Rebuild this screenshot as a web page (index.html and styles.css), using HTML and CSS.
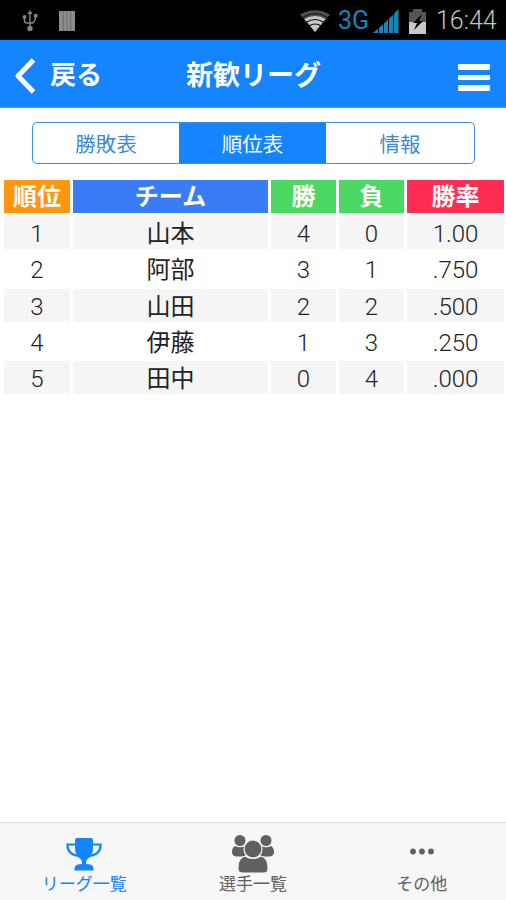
FILE: index.html
```html
<!DOCTYPE html>
<html lang="ja">
<head>
<meta charset="utf-8">
<title>新歓リーグ</title>
<link rel="stylesheet" href="styles.css">
</head>
<body>
<div class="status">
  <svg class="usb" width="16" height="22" viewBox="0 0 16 22" fill="none" stroke="#858585" stroke-width="1.4"><path d="M8 3v15M2.500 7v3.500Q2.500 13 5 13h5.500Q13.500 12 13.500 6"/><g fill="#858585" stroke="none"><path d="M8 0l2.500 4h-5zM12 4h3.500v3.500H12z"/><circle cx="2.500" cy="7" r="1.900"/><circle cx="8" cy="18.500" r="2.700"/></g></svg>
  <svg class="bars" width="16" height="20" viewBox="0 0 17 20" preserveAspectRatio="none"><path fill="#8c8c8c" d="M0 0h17v20H0z"/><path stroke="#6c6c6c" stroke-width="1" d="M4.500 0v20M8.500 0v20M12.500 0v20"/></svg>
  <div class="status-right">
    <svg width="30" height="22" viewBox="0 0 30 22"><path fill="#505050" d="M0 4.500Q15-4 30 4.500L15 22z"/><path fill="#c8c8c8" d="M4.500 9Q15 3 25.500 9L15 22z"/><path fill="none" stroke="#111" stroke-width="1.200" d="M2 8Q15-.5 28 8M6 12.500q9-6 18 0M9 16q6-4 12 0"/></svg>
    <span class="network">3G</span>
    <svg class="signal" width="26" height="24" viewBox="0 0 26 24" fill="#1786b5"><path d="M0 24l5-4.500V24zM6 18.700l4-3.400V24H6zM11 14.300l4-3.700V24h-4zM16 9.700l4-3.900V24h-4zM21 4.800L25.500 0v24H21z"/></svg>
    <svg class="battery" width="17" height="25" viewBox="0 0 17 25"><path fill="#555" d="M4 0h9v3h4v22H0V3h4z"/><path fill="#c8c8c8" d="M0 13h17v12H0z"/><path fill="#000" d="M13 5L4 14h4L5 21l9-9h-4z"/></svg>
    <span class="clock">16:44</span>
  </div>
</div>
<header class="nav">
  <div class="back"><svg width="22" height="36" viewBox="0 0 22 36" fill="none" stroke="#fff" stroke-width="5" stroke-linejoin="round"><path d="M19.500 2L4 18l15.500 16"/></svg><span>戻る</span></div>
  <h1>新歓リーグ</h1>
  <div class="menu"><i></i><i></i><i></i></div>
</header>
<main>
  <div class="tabs"><span>勝敗表</span><span class="active">順位表</span><span>情報</span></div>
  <div class="table">
    <div class="row head"><b class="rank">順位</b><b class="team">チーム</b><b class="count">勝</b><b class="count">負</b><b class="rate">勝率</b></div>
    <div class="row odd"><span>1</span><span class="name">山本</span><span>4</span><span>0</span><span>1.00</span></div>
    <div class="row"><span>2</span><span class="name">阿部</span><span>3</span><span>1</span><span>.750</span></div>
    <div class="row odd"><span>3</span><span class="name">山田</span><span>2</span><span>2</span><span>.500</span></div>
    <div class="row"><span>4</span><span class="name">伊藤</span><span>1</span><span>3</span><span>.250</span></div>
    <div class="row odd"><span>5</span><span class="name">田中</span><span>0</span><span>4</span><span>.000</span></div>
  </div>
</main>
<footer>
  <div class="item current">
    <svg width="36" height="34" viewBox="0 0 36 34"><path fill="none" stroke="currentColor" stroke-width="2.200" d="M10 6.500H1.500Q1 17 14 18M26 6.500h8.500Q35 17 22 18"/><path fill="currentColor" d="M9 2q0-2 2-2h14q2 0 2 2v8q0 8-5.500 11-2 2-1.500 5 7 0 7.500 4v2.500h-19V30q.5-4 7.500-4 .5-3-1.500-5Q9 18 9 10z"/></svg>
    <span>リーグ一覧</span>
  </div>
  <div class="item">
    <svg class="people" width="42" height="38" viewBox="0 0 42 38" fill="currentColor"><circle cx="8" cy="5.500" r="5.500"/><circle cx="34" cy="5.500" r="5.500"/><path d="M3 11q5 2.500 10 0l3 5-3 5.500H4q-4-.5-4-5Q0 13 3 11zM39 11q-5 2.500-10 0l-3 5 3 5.500h9q4-.5 4-5 0-3.500-3-5.500z"/><g stroke="#f7f7f7" stroke-width="1.200"><path d="M13 21q8 5 16 0 7 2 7 11v2q0 4-4 4H10q-4 0-4-4v-2q0-9 7-11z"/><circle cx="21" cy="14" r="9"/></g></svg>
    <span>選手一覧</span>
  </div>
  <div class="item">
    <svg width="26" height="34" viewBox="0 0 26 34" fill="currentColor"><circle cx="4" cy="13.500" r="2.900"/><circle cx="13" cy="13.500" r="2.900"/><circle cx="22" cy="13.500" r="2.900"/></svg>
    <span>その他</span>
  </div>
</footer>
</body>
</html>
```
FILE: styles.css
```css
* { box-sizing: border-box; }
body {
  margin: 0;
  height: 900px;
  display: flex;
  flex-direction: column;
  background: #fff;
  color: #222;
  font-family: Roboto, "Noto Sans CJK JP", sans-serif;
  white-space: nowrap;
  overflow: hidden;
}
svg { display: block; flex: none; }
.status {
  height: 40px;
  background: #000;
  display: flex;
  align-items: center;
  padding: 2px 8px 0 22px;
}
.bars { margin-left: 21px; }
.status-right { margin-left: auto; display: flex; align-items: center; }
.network { width: 31px; margin-left: 8px; color: #1786b5; font-size: 25px; line-height: 36px; }
.signal { margin-left: 4px; }
.battery { margin-left: 10px; }
.clock { width: 62px; margin-left: 10px; color: #c4c4c4; font-size: 25px; font-weight: 300; line-height: 36px; }
.nav {
  height: 68px;
  background: #1484ff;
  border-bottom: 1px solid #4b9cf5;
  color: #fff;
  display: grid;
  grid-template-columns: 1fr 136px 1fr;
  align-items: center;
  padding: 0 16px 0 14px;
}
.back { display: flex; align-items: center; gap: 14px; font-size: 26px; font-weight: 700; line-height: 34px; padding-top: 5px; }
.back span { margin-top: -2px; }
.nav h1 { margin: 0 0 0 2px; padding-top: 4px; font-size: 27px; font-weight: 700; line-height: 34px; text-align: center; }
.menu { justify-self: end; width: 32px; display: grid; gap: 5px; padding-top: 8px; }
.menu i { height: 5.500px; background: #fff; border-radius: 1px; }
main { flex: 1; padding: 14px 2px 0 4px; }
.tabs {
  width: 443px;
  height: 42px;
  margin-left: 28px;
  border: 1.500px solid #3a8ee8;
  border-radius: 5px;
  display: grid;
  grid-template-columns: 146px 147px 1fr;
  color: #3e87d9;
  font-size: 20.500px;
  line-height: 45px;
  text-align: center;
  overflow: hidden;
}
.tabs .active { background: #1484ff; color: #fff; }
.table { display: grid; gap: 3.400px; margin-top: 15.500px; }
.row {
  display: grid;
  grid-template-columns: 66px 195px 65px 65px 97px;
  gap: 3px;
  height: 33px;
  font-size: 24px;
  font-weight: 300;
  line-height: 36px;
  text-align: center;
}
.row > * { height: 33px; }
.row .name { font-weight: 400; }
.odd span { background: #f5f5f5; }
.head { color: #fff; line-height: 34px; }
.head b { font-weight: 700; }
.rank { background: #ff9610; }
.team { background: #397cf5; }
.count { background: #4bd763; }
.rate { background: #ff2d55; }
footer {
  height: 78px;
  border-top: 1.500px solid #dedede;
  background: #f7f7f7;
  display: grid;
  grid-template-columns: repeat(3, 1fr);
  color: #606060;
}
.item { display: flex; flex-direction: column; align-items: center; padding-top: 15px; }
.item span { height: 24px; font-size: 17px; line-height: 24px; }
.item .people { margin: -3px 0 -1px; }
.current { color: #1484ff; }
```
